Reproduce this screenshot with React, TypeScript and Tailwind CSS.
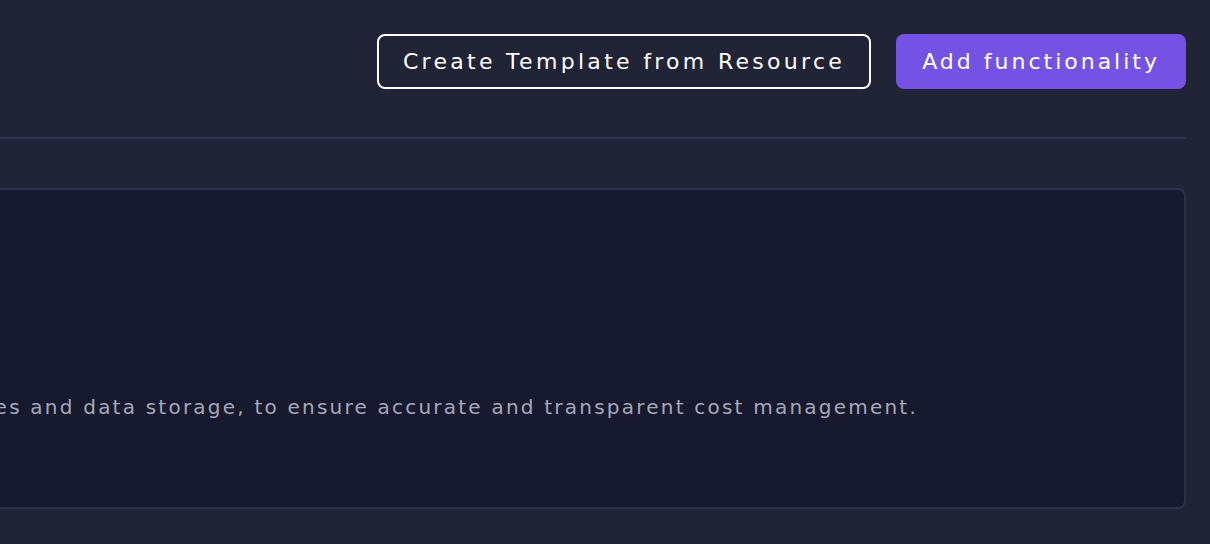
import React from 'react'

export default function App() {
  return (
    <div
      className="min-h-screen w-full overflow-hidden bg-[#212337] pr-6"
      style={{ fontFamily: '"DejaVu Sans", "Noto Sans", sans-serif' }}
    >
      {/* Header actions */}
      <div className="flex items-center justify-end gap-[25px] pt-[34px] pb-12">
        <button className="h-[55px] rounded-lg border-2 border-white px-[24px] text-[22px] tracking-[3.3px] text-white">
          Create Template from Resource
        </button>
        <button className="h-[55px] rounded-lg bg-[#7452e4] px-[26px] text-[22px] tracking-[3px] text-white">
          Add functionality
        </button>
      </div>

      <div className="h-[2px] w-full bg-[#30334a]" />

      {/* Summary card */}
      <div className="mt-[49px] h-[321px] overflow-hidden rounded-r-lg border-2 border-l-0 border-[#2d3046] bg-[#171a2e]">
        <div className="flex h-full flex-col justify-end pb-[85px]">
          <div className="flex justify-end pr-[266px]">
            <p className="whitespace-nowrap text-[20px] tracking-[2.22px] text-[#a6a8ba]">
              We track resource usage, including compute instances and data storage, to ensure accurate and transparent cost management.
            </p>
          </div>
        </div>
      </div>
    </div>
  )
}
